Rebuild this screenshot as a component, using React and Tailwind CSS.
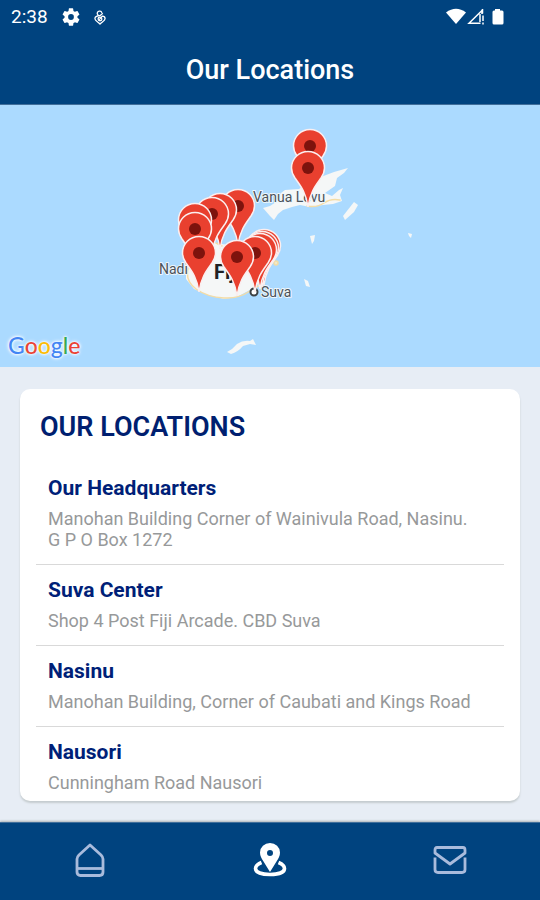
import React from "react";

const locations = [
  {
    name: "Our Headquarters",
    address: ["Manohan Building Corner of Wainivula Road, Nasinu.", "G P O Box 1272"],
  },
  { name: "Suva Center", address: ["Shop 4 Post Fiji Arcade. CBD Suva"] },
  { name: "Nasinu", address: ["Manohan Building, Corner of Caubati and Kings Road"] },
  { name: "Nausori", address: ["Cunningham Road Nausori"] },
];

const pins = [
  [310, 41],
  [308, 63],
  [238, 101],
  [220, 105],
  [212, 109],
  [195, 115],
  [195, 124],
  [264, 141],
  [262, 143],
  [260, 145],
  [255, 148],
  [199, 148],
  [237, 152],
];

function Pin({ x, y }) {
  return (
    <g transform={`translate(${x} ${y})`}>
      <path
        d="M0 39C-2 24-8 17-13 10C-15 7-16.500 4-16.500 0A16.500 16.500 0 0 1 16.500 0C16.500 4 15 7 13 10C8 17 2 24 0 39Z"
        fill="#e9402f"
        stroke="#fbeff0"
        strokeWidth="1.500"
      />
      <circle r="6" fill="#7d130d" />
    </g>
  );
}

function StatusBar() {
  return (
    <div className="flex h-[34px] items-center justify-between pr-9 pl-[11px]">
      <div className="flex items-center">
        <span className="text-[19px] leading-5">2:38</span>
        <svg className="ml-3.5" width="18" height="18" viewBox="2 2 20 20" fill="currentColor" aria-hidden="true">
          <path d="M19.140 12.940c.04-.3.060-.61.060-.94s-.02-.64-.07-.94l2.030-1.580a.49.49 0 0 0 .12-.61l-1.920-3.320a.488.488 0 0 0-.59-.22l-2.390.96c-.5-.38-1.030-.7-1.620-.94l-.36-2.540a.484.484 0 0 0-.48-.41h-3.840c-.24 0-.43.170-.47.410l-.36 2.540c-.59.240-1.130.570-1.620.940l-2.390-.96a.49.49 0 0 0-.59.220L2.740 8.870c-.12.210-.08.470.12.610l2.030 1.580c-.05.3-.09.630-.09.940s.02.640.070.940l-2.030 1.580a.49.49 0 0 0-.12.610l1.920 3.320c.12.220.370.290.590.220l2.390-.96c.5.380 1.030.7 1.620.940l.36 2.540c.05.240.240.410.480.410h3.840c.24 0 .440-.17.470-.41l.36-2.540c.590-.24 1.130-.56 1.620-.94l2.390.960c.220.080.470 0 .590-.22l1.920-3.320a.49.49 0 0 0-.12-.61l-2.010-1.580ZM12 15.200a3.200 3.200 0 1 1 0-6.400 3.200 3.200 0 0 1 0 6.400Z" />
        </svg>
        <svg className="ml-3.5" width="12" height="15" viewBox="0 0 13 16" fill="none" stroke="currentColor" strokeWidth="1.400" aria-hidden="true">
          <path d="M8.500 3A2.500 2.500 0 1 0 6.500 6C3.500 6 1 7 1 9.300C1 11.500 4.500 13 6.500 15C8.500 13 12 11.500 12 9.300C12 7.500 10.500 6.500 9 6.500L5.500 10.500" />
          <circle cx="6.500" cy="9.500" r="2" />
          <path d="M6.500 6L9.500 3.500" />
        </svg>
      </div>
      <svg width="58" height="18" viewBox="0 0 58 18" fill="currentColor" role="img" aria-label="Wi-Fi, signal and battery">
        <path d="M0 4.500Q10 -3 20 4.500L10 16Z" />
        <path d="M23 15.300L36 2.500V15.300Z" fill="none" stroke="currentColor" strokeWidth="1.500" />
        <path d="M34.500 6V16.500H38V6Z" fill="#00437f" />
        <path d="M36.500 1V5.500M34 6V14M37 7.500V13M37 14.500V16.500" stroke="currentColor" strokeWidth="1.500" />
        <path d="M49 1H54V2.500H56Q57.500 2.500 57.500 4V15Q57.500 16.500 56 16.500H48Q46.500 16.500 46.500 15V4Q46.500 2.500 48 2.500H49Z" />
      </svg>
    </div>
  );
}

function LocationMap() {
  return (
    <section className="relative h-[262px] overflow-hidden bg-[#abdaff]" aria-label="Map of locations in Fiji">
      <svg className="block h-full w-full" viewBox="0 0 540 262" preserveAspectRatio="xMidYMid slice">
        <g fill="#f5f7f7">
          <path d="M263 103L270 101L276 97L281 88L285 85L299 84L306 79L314 75L326 70L334 67L348 63L344 68L337 73L335 81L325 88L332 91L339 85L343 83L340 90L342 96L333 99L323 100L310 102L300 100L292 102L283 105L278 109L274 115L270 111Z" />
          <path d="M343 111L354 97L358 100L354 107L345 115Z" />
          <path d="M310 131L315 130L314 136L312 139Z" />
          <path d="M304 174L308 176L310 182L306 181Z" />
          <path d="M408 128l4 1l-1 4l-2-2Z" />
          <path d="M227 247Q233 244 237 239Q243 235 250 236L253 234L256 240L250 239L243 241Q238 247 231 249Z" />
          <path d="M186 151L193 137L207 136L220 139L234 140L254 145L263 157L264 170L257 180L248 186L237 192L224 194L208 190L194 184L186 174Z" />
        </g>
        <g fill="none" stroke="#f4dca5" strokeWidth="1.500" strokeLinecap="round">
          <path d="M307 101Q317 103 324 98T340 95" />
          <path d="M188 163Q185 176 196 184T224 193Q238 194 250 186L263 178" />
          <path d="M216 138L222 141" />
          <circle cx="276" cy="158" r="2" fill="#efe9cb" />
          <path d="M272 154L274 156" />
        </g>
        <circle cx="254" cy="187" r="3.500" fill="#fff" stroke="#3c4043" strokeWidth="2" />
        <g fontFamily="Roboto, sans-serif" fill="#4b5259" stroke="#eef6fb" strokeWidth="2" paintOrder="stroke" strokeLinejoin="round">
          <text x="253" y="97" fontSize="14">Vanua Levu</text>
          <text x="159" y="169" fontSize="14">Nadi</text>
          <text x="214" y="174" fontSize="20" fontWeight="700" fill="#202124">Fiji</text>
          <text x="261" y="192" fontSize="14">Suva</text>
        </g>
        {pins.map(([x, y]) => (
          <Pin key={`${x}-${y}`} x={x} y={y} />
        ))}
      </svg>
      <div className="absolute bottom-1.5 left-2 font-[Lato,sans-serif] text-[23px] leading-8 font-medium [text-shadow:0_0_2px_#fff,0_0_3px_#fff,0_0_4px_#fff]">
        <span className="text-[#4285f4]">G</span>
        <span className="text-[#ea4335]">o</span>
        <span className="text-[#fbbc05]">o</span>
        <span className="text-[#4285f4]">g</span>
        <span className="text-[#34a853]">l</span>
        <span className="text-[#ea4335]">e</span>
      </div>
    </section>
  );
}

function HomeIcon() {
  return (
    <svg width="30" height="34" viewBox="0 0 30 34" fill="none" stroke="currentColor" strokeWidth="2.800" strokeLinejoin="round" aria-hidden="true">
      <path d="M15 2L26 12Q28 14 28 16V29Q28 32.500 24.500 32.500H5.500Q2 32.500 2 29V16Q2 14 4 12Z" />
      <path d="M2 25.500H28" />
    </svg>
  );
}

function PlaceIcon() {
  return (
    <svg width="34" height="34" viewBox="0 0 34 34" aria-hidden="true">
      <path d="M8.500 19.500Q2.500 22 2.500 25.500C2.500 29.500 9 31.500 17 31.500S31.500 29.500 31.500 25.500Q31.500 22 25.500 19.500" fill="none" stroke="currentColor" strokeWidth="3.600" />
      <path fillRule="evenodd" d="M17 29Q14.500 25 10.500 18.500Q7 13.500 7 9.500A10 9.500 0 0 1 27 9.500Q27 13.500 23.500 18.500Q19.500 25 17 29ZM17 13A3 3 0 1 0 17 7A3 3 0 0 0 17 13Z" fill="currentColor" />
    </svg>
  );
}

function MailIcon() {
  return (
    <svg width="34" height="28" viewBox="0 0 34 28" fill="none" stroke="currentColor" strokeWidth="2.800" strokeLinejoin="round" aria-hidden="true">
      <path d="M2 11.500V23.500Q2 26.500 5 26.500H29Q32 26.500 32 23.500V11.500" />
      <path d="M4 1.500H30Q32 1.500 32 4V7L17 18L2 7V4Q2 1.500 4 1.500Z" />
    </svg>
  );
}

export default function App() {
  return (
    <div className="flex min-h-screen flex-col bg-[#e7edf5] font-[Roboto,sans-serif]">
      <header className="h-[105px] border-b border-[#416f9b] bg-[#00437f] text-white">
        <StatusBar />
        <h1 className="pt-[18px] text-center text-[27px] leading-9 font-medium">Our Locations</h1>
      </header>

      <LocationMap />

      <main className="flex-1 px-5 pt-[22px] pb-4">
        <section className="rounded-[10px] bg-white px-4 pt-5 pb-2 shadow-[0_2px_2px_#c5cccf]">
          <h2 className="mb-[18px] px-1 text-[27px] leading-9 font-semibold text-[#001f70]">OUR LOCATIONS</h2>
          <ul>
            {locations.map((place) => (
              <li
                key={place.name}
                className="border-b border-[#d9d9d9] px-3 pt-[13px] pb-3.5 last:border-b-0 last:pb-0"
              >
                <h3 className="mb-2 text-[21px] leading-6 font-bold text-[#001f78]">{place.name}</h3>
                {place.address.map((line) => (
                  <p key={line} className="text-[18px] leading-[21px] text-[#97999a]">
                    {line}
                  </p>
                ))}
              </li>
            ))}
          </ul>
        </section>
      </main>

      <nav className="grid h-[78px] grid-cols-3 border-t border-[#416f9b] bg-[#00437f] pb-1 text-[#a9bbdc] shadow-[0_-1px_2px_#aeb5b8]">
        <button type="button" aria-label="Home" className="flex items-center justify-center">
          <HomeIcon />
        </button>
        <button type="button" aria-label="Locations" aria-current="page" className="flex items-center justify-center text-white">
          <PlaceIcon />
        </button>
        <button type="button" aria-label="Messages" className="flex items-center justify-center">
          <MailIcon />
        </button>
      </nav>
    </div>
  );
}
